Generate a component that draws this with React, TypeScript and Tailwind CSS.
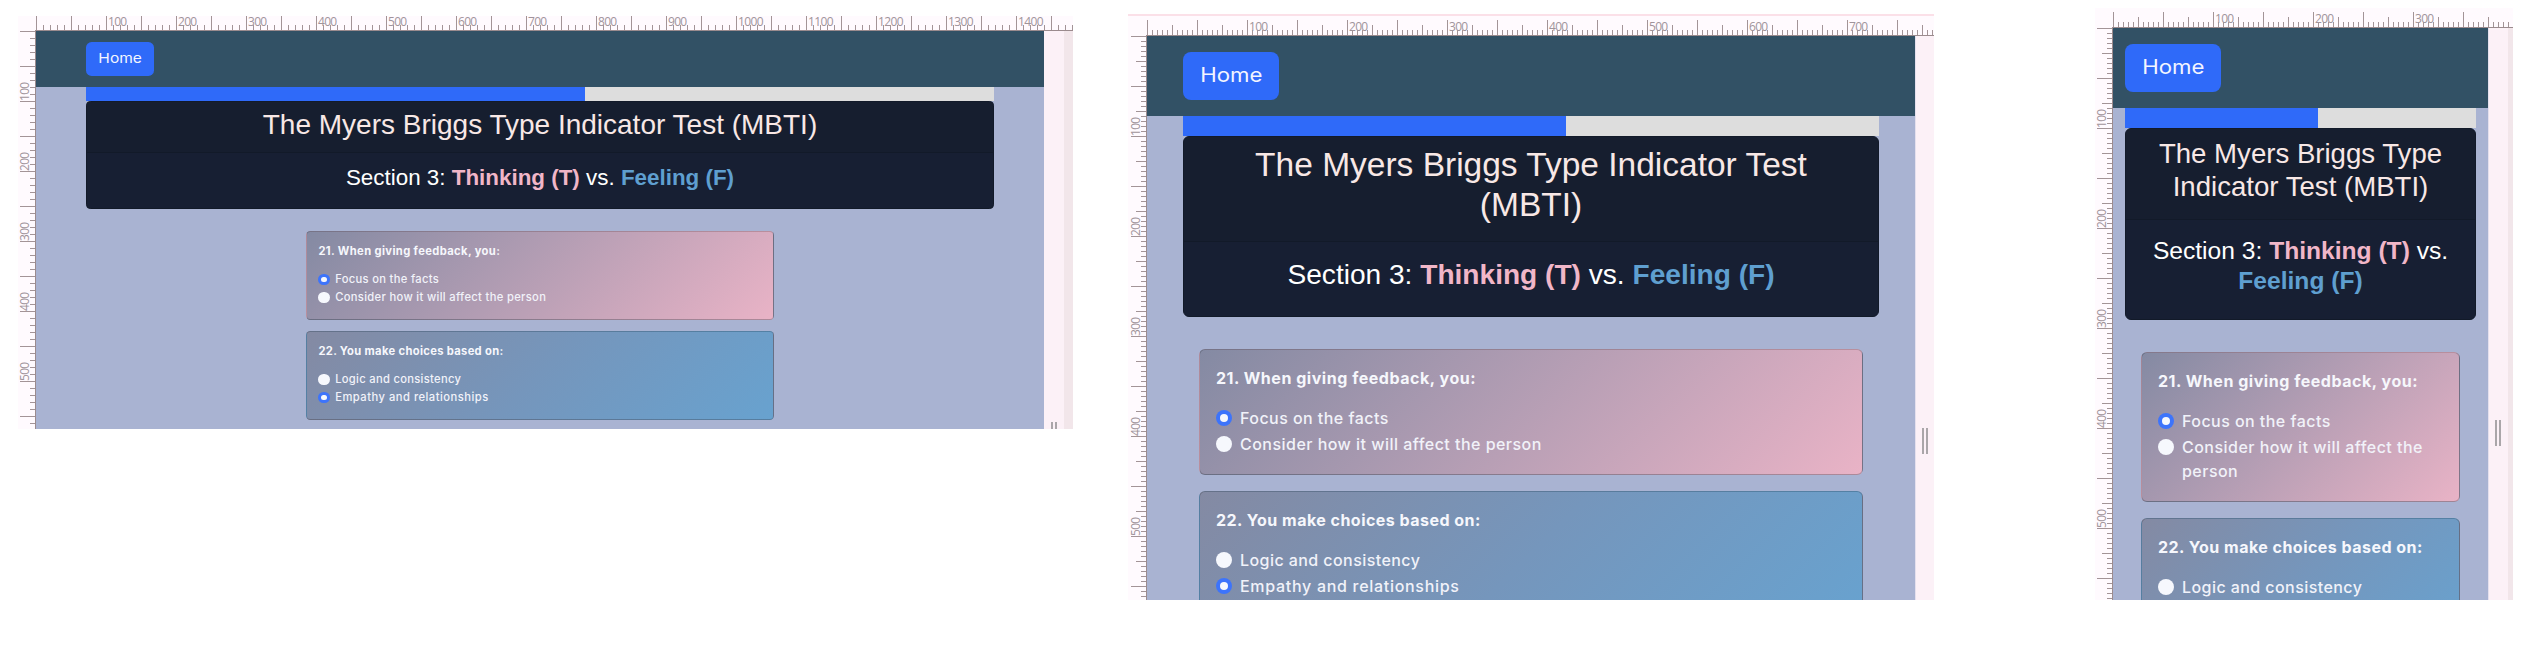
import React from "react";

type Variant = "desktop" | "tablet" | "phone";

interface RulerProps {
  length: number;
  thickness: number;
  origin: number;
  scale: number;
  step: number;
  vertical?: boolean;
}

function Ruler({ length, thickness, origin, scale, step, vertical = false }: RulerProps) {
  const marks: React.ReactNode[] = [];
  const edge = thickness - 1;
  for (let unit = 0; origin + unit * scale < length; unit += step) {
    const at = Math.round(origin + unit * scale);
    const size = unit % 50 === 0 ? 15 : step === 5 && unit % 25 === 0 ? 10 : 5;
    marks.push(
      vertical ? (
        <rect key={unit} x={edge - size} y={at} width={size} height={1} fill="#a39497" />
      ) : (
        <rect key={unit} x={at} y={Math.max(0, edge - size)} width={1} height={Math.min(size, edge)} fill="#a39497" />
      ),
    );
    if (unit > 0 && unit % 100 === 0) {
      const label = String(unit);
      const width = label.length * 6.4;
      marks.push(
        vertical ? (
          <text
            key={"t" + unit}
            transform={`translate(${edge - 6.5} ${at}) rotate(-90)`}
            fontSize={12}
            textLength={width}
            fill="#a0949a"
          >
            {label}
          </text>
        ) : (
          <text key={"t" + unit} x={at + 2} y={edge - 4} fontSize={12} textLength={width} fill="#a0949a">
            {label}
          </text>
        ),
      );
    }
  }
  return (
    <svg
      className="block shrink-0 overflow-visible bg-[#fffafe] font-['Open_Sans',sans-serif]"
      width={vertical ? thickness : length}
      height={vertical ? length : thickness}
    >
      {marks}
      {vertical ? (
        <rect x={edge} y={0} width={1} height={length} fill="#9b8b8e" />
      ) : (
        <rect x={origin - 1} y={edge} width={length - origin + 1} height={1} fill="#9b8b8e" />
      )}
    </svg>
  );
}

interface Option {
  label: string;
  tracking: string;
}

interface QuestionProps {
  title: string;
  titleTracking: string;
  options: Option[];
  selected: number;
  tone: string;
}

function Question({ title, titleTracking, options, selected, tone }: QuestionProps) {
  return (
    <section className={`mb-4 rounded-md border border-black/20 p-4 ${tone}`}>
      <p className={`mb-4 whitespace-nowrap text-[16px] leading-6 font-bold text-[#f6f7fc] ${titleTracking}`}>{title}</p>
      {options.map((option, index) => (
        <div key={option.label} className="mb-0.5 flex min-h-6 items-start gap-2">
          <span
            className={
              index === selected
                ? "mt-1 flex size-4 shrink-0 items-center justify-center rounded-full bg-[#3d74fb]"
                : "mt-1 flex size-4 shrink-0 rounded-full bg-[#f6f8fd]"
            }
          >
            {index === selected && <span className="size-2 rounded-full bg-[#f6f8fd]" />}
          </span>
          <span className={`text-[16px] leading-6 font-medium text-[#f1f2f9] ${option.tracking}`}>{option.label}</span>
        </div>
      ))}
    </section>
  );
}

const layouts: Record<
  Variant,
  { page: string; container: string; list: string; h1: string; h2: string; cardGap: string }
> = {
  desktop: {
    page: "w-[1440px] [zoom:0.7]",
    container: "w-[1296px]",
    list: "w-[668px]",
    h1: "text-[40px]",
    h2: "text-[32px]",
    cardGap: "mb-[31px]",
  },
  tablet: {
    page: "w-[768px]",
    container: "w-[696px]",
    list: "w-[664px]",
    h1: "text-[33.5px]",
    h2: "text-[28.1px]",
    cardGap: "mb-8",
  },
  phone: {
    page: "w-[375px]",
    container: "w-[351px]",
    list: "w-[319px]",
    h1: "text-[27.6px]",
    h2: "text-[24.6px]",
    cardGap: "mb-8",
  },
};

function QuizPage({ variant }: { variant: Variant }) {
  const l = layouts[variant];
  return (
    <div className="h-full shrink-0 overflow-hidden bg-[#a9b3d2]">
      <div className={`font-['Inter',sans-serif] ${l.page}`}>
        <header className="bg-[#325165] py-4">
          <div className={`mx-auto ${l.container}`}>
            <button className="flex h-12 w-24 items-center justify-center rounded-lg bg-[#2f6af9] text-[19.5px] leading-none text-[#f3f5ff]">
              <span className="inline-block scale-x-[1.14]">Home</span>
            </button>
          </div>
        </header>
        <main className={`mx-auto ${l.container}`}>
          <div className="h-5 bg-[#dddddd]">
            <div className="h-full w-[55%] bg-[#2f6af9]" />
          </div>
          <div
            className={`rounded-md border border-[#121a29] bg-[#171f33] text-center font-['Liberation_Sans',sans-serif] ${l.cardGap}`}
          >
            <div className="rounded-t-[5px] border-b border-[#121a29] bg-[#161e2f] px-4 py-2">
              <h1 className={`mb-2 leading-[1.2] text-[#f8e8e6] ${l.h1}`}>The Myers Briggs Type Indicator Test (MBTI)</h1>
            </div>
            <div className="p-4">
              <h2 className={`mb-2 leading-[1.2] text-white ${l.h2}`}>
                Section 3: <strong className="text-[#f1b6c8]">Thinking (T)</strong> vs.{" "}
                <strong className="text-[#5f9fd0]">Feeling (F)</strong>
              </h2>
            </div>
          </div>
          <div className={`mx-auto ${l.list}`}>
            <Question
              title="21. When giving feedback, you:"
              titleTracking="tracking-[0.53px]"
              options={[
                { label: "Focus on the facts", tracking: "tracking-[0.45px]" },
                { label: "Consider how it will affect the person", tracking: "tracking-[0.47px]" },
              ]}
              selected={0}
              tone="bg-[linear-gradient(135deg,#848aa3,#e9b3c6)]"
            />
            <Question
              title="22. You make choices based on:"
              titleTracking="tracking-[0.47px]"
              options={[
                { label: "Logic and consistency", tracking: "tracking-[0.43px]" },
                { label: "Empathy and relationships", tracking: "tracking-[0.7px]" },
              ]}
              selected={1}
              tone="bg-[linear-gradient(135deg,#848aa3,#7596bc_50%,#68a2cf)]"
            />
          </div>
        </main>
      </div>
    </div>
  );
}

function Grip({ className }: { className: string }) {
  return (
    <div className={`flex h-full shrink-0 gap-0.5 overflow-hidden ${className}`}>
      <span className="h-[26px] w-0.5 shrink-0 bg-[#aaa6a9]" />
      <span className="h-[26px] w-0.5 shrink-0 bg-[#aaa6a9]" />
    </div>
  );
}

export default function App() {
  return (
    <div className="flex h-[672px] w-[2522px] items-start overflow-hidden bg-white">
      <div className="mt-4 ml-[18px] h-[413px] w-[1055px] shrink-0 bg-[#fcf1f7]">
        <Ruler length={1055} thickness={15} origin={18} scale={0.7} step={10} />
        <div className="flex h-[398px]">
          <Ruler vertical length={398} thickness={18} origin={0} scale={0.7} step={10} />
          <QuizPage variant="desktop" />
          <div className="h-full w-5 shrink-0 overflow-hidden pt-[391px] pl-[7px]">
            <div className="flex h-[7px] gap-0.5">
              <span className="w-0.5 bg-[#aaa6a9]" />
              <span className="w-0.5 bg-[#aaa6a9]" />
            </div>
          </div>
          <div className="w-[9px] shrink-0 bg-[#f2e6ea]" />
        </div>
      </div>

      <div className="mt-3.5 ml-[55px] h-[586px] w-[806px] shrink-0 border-t-2 border-[#fbe0e8] bg-[#fcf1f7]">
        <Ruler length={806} thickness={20} origin={19} scale={1} step={5} />
        <div className="flex h-[564px]">
          <Ruler vertical length={564} thickness={19} origin={0} scale={1} step={5} />
          <QuizPage variant="tablet" />
          <Grip className="w-[19px] border-l border-[#e5e0ee] pt-[392px] pl-1.5" />
        </div>
      </div>

      <div className="mt-2 ml-[161px] h-[592px] w-[418px] shrink-0 bg-[#fcf1f7]">
        <Ruler length={418} thickness={20} origin={18} scale={1} step={5} />
        <div className="flex h-[572px]">
          <Ruler vertical length={572} thickness={18} origin={0} scale={1} step={5} />
          <QuizPage variant="phone" />
          <Grip className="w-5 border-l border-[#e5e0ee] pt-[392px] pl-1.5" />
          <div className="w-[5px] shrink-0 bg-[#f2e6ea]" />
        </div>
      </div>
    </div>
  );
}
